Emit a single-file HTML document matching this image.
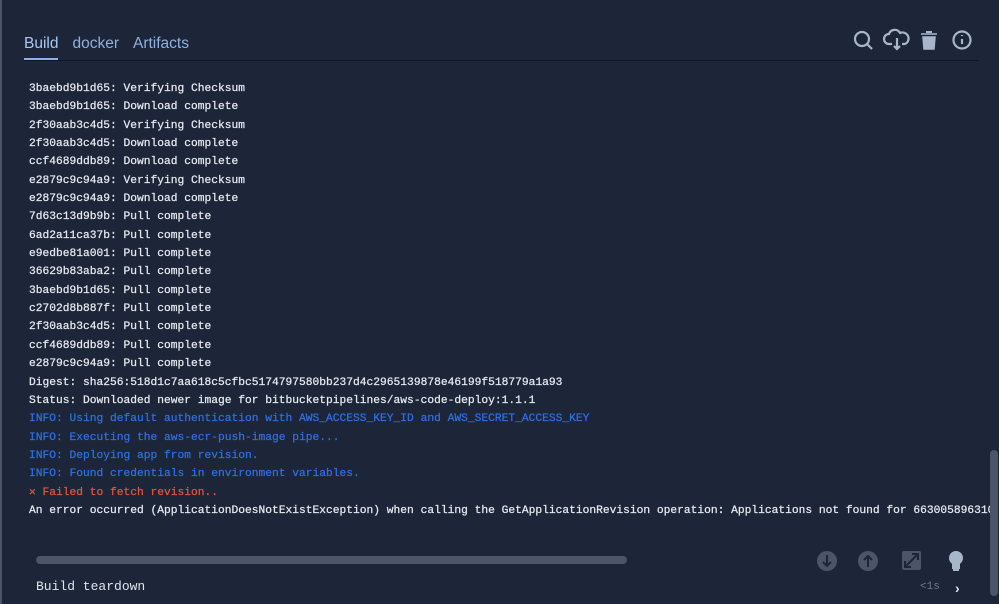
<!DOCTYPE html>
<html><head><meta charset="utf-8"><style>
body{margin:0;width:999px;height:604px;background:#1d2638;overflow:hidden;position:relative;font-family:"Liberation Sans",sans-serif}
.lb{position:absolute;left:0;top:0;width:2px;height:604px;background:#4a5568}
.tabs{position:absolute;top:35px;left:24px;font-size:15.5px;color:#8fb0e0}
.tabs span{margin-right:14px}
.tabs .a{color:#a9c7f5;border-bottom:3px solid #8fb0e0;padding-bottom:5px;display:inline-block}
.rule{position:absolute;left:24px;top:60px;width:955px;height:1px;background:#0f1522}
.log{position:absolute;left:29px;top:80px;font-family:"Liberation Mono",monospace;font-size:11.25px;line-height:18.35px;color:#e6e9ee;white-space:pre;-webkit-text-stroke:0.25px #e6e9ee}
.i{color:#2f6fe0;-webkit-text-stroke:0.25px #2f6fe0}.e{color:#e5533f;-webkit-text-stroke:0.25px #e5533f}
.sb{position:absolute;left:36px;top:556px;width:591px;height:8px;border-radius:4px;background:#4a5568}
.vs{position:absolute;left:990px;top:450px;width:8px;height:146px;border-radius:4px;background:#4a5568}
.ft{position:absolute;left:36px;top:579px;font-family:"Liberation Mono",monospace;font-size:13px;color:#dfe3ea}
.t{position:absolute;left:920px;top:581px;font-family:"Liberation Mono",monospace;font-size:11px;color:#6b7a90}
</style></head><body>
<div class="lb"></div>
<div class="tabs"><span class="a">Build</span><span>docker</span><span>Artifacts</span></div>
<div class="rule"></div>
<svg style="position:absolute;left:850px;top:28px" width="130" height="26" fill="none" stroke="#a8b6cc" stroke-width="2.2">
<circle cx="12" cy="11" r="7"/><path d="M17 16l5 5"/>
<path d="M42 16h-3a5 5 0 0 1 0-10a6 6 0 0 1 11-1a5 5 0 0 1 5 11h-3M47 10v11m-3-3l3 3l3-3"/>
<path d="M71 6h16M73 9h12l-1 12h-10z" fill="#a8b6cc" stroke-width="1.5"/><path d="M76 4h6" stroke-width="2"/>
<circle cx="112" cy="12" r="8.5"/><path d="M112 11v5M112 7v1"/>
</svg>
<div class="log">3baebd9b1d65: Verifying Checksum
3baebd9b1d65: Download complete
2f30aab3c4d5: Verifying Checksum
2f30aab3c4d5: Download complete
ccf4689ddb89: Download complete
e2879c9c94a9: Verifying Checksum
e2879c9c94a9: Download complete
7d63c13d9b9b: Pull complete
6ad2a11ca37b: Pull complete
e9edbe81a001: Pull complete
36629b83aba2: Pull complete
3baebd9b1d65: Pull complete
c2702d8b887f: Pull complete
2f30aab3c4d5: Pull complete
ccf4689ddb89: Pull complete
e2879c9c94a9: Pull complete
Digest: sha256:518d1c7aa618c5cfbc5174797580bb237d4c2965139878e46199f518779a1a93
Status: Downloaded newer image for bitbucketpipelines/aws-code-deploy:1.1.1
<span class="i">INFO: Using default authentication with AWS_ACCESS_KEY_ID and AWS_SECRET_ACCESS_KEY</span>
<span class="i">INFO: Executing the aws-ecr-push-image pipe...</span>
<span class="i">INFO: Deploying app from revision.</span>
<span class="i">INFO: Found credentials in environment variables.</span>
<span class="e">✕ Failed to fetch revision..</span>
An error occurred (ApplicationDoesNotExistException) when calling the GetApplicationRevision operation: Applications not found for 663005896310</div>
<div class="sb"></div><div class="vs"></div>
<svg style="position:absolute;left:816px;top:550px" width="160" height="24">
<circle cx="11" cy="11" r="10" fill="#4a5568"/><path d="M11 5v11m-4-4l4 4l4-4" stroke="#1d2638" stroke-width="2" fill="none"/>
<circle cx="52" cy="11" r="10" fill="#4a5568"/><path d="M52 17v-11m-4 4l4-4l4 4" stroke="#1d2638" stroke-width="2" fill="none"/>
<rect x="86" y="1" width="19" height="19" rx="2" fill="#4a5568"/><path d="M89 17l13-13M89 11v6h6M102 10v-6h-6" stroke="#1d2638" stroke-width="2" fill="none"/>
<circle cx="140" cy="8" r="7" fill="#a8b6cc"/><rect x="136" y="13" width="8" height="6" fill="#a8b6cc"/><rect x="137" y="19" width="6" height="2" fill="#a8b6cc"/>
</svg>
<div class="ft">Build teardown</div>
<div class="t">&lt;1s</div>
<div style="position:absolute;left:955px;top:580px;color:#dfe3ea;font-size:14px;font-weight:bold">›</div>
</body></html>
